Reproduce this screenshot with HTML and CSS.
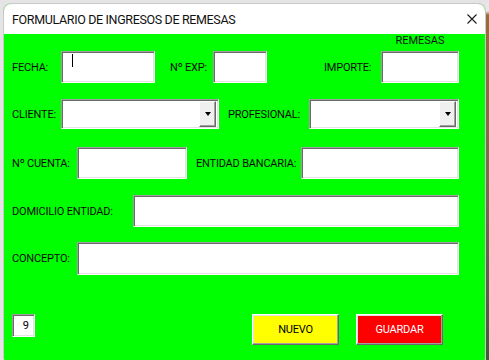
FILE: index.html
```html
<!DOCTYPE html>
<html lang="es">
<head>
  <meta charset="UTF-8">
  <meta name="viewport" content="width=device-width, initial-scale=1.0">
  <title>Formulario de ingresos de remesas</title>
  <link rel="stylesheet" href="styles.css">
</head>
<body>

  <div class="window">
    <div class="titlebar">
      <span class="title">FORMULARIO DE INGRESOS DE REMESAS</span>
      <svg class="close" width="10" height="10" viewBox="0 0 10 10">
        <path d="M0.5 0.5 L9.5 9.5 M9.5 0.5 L0.5 9.5" stroke="#1a1a1a" stroke-width="1.1" fill="none"/>
      </svg>
    </div>

    <div class="content">
      <div class="caption-row">
        <span class="caption">REMESAS</span>
      </div>

      <div class="row row-1">
        <label class="lbl w-fecha">FECHA:</label>
        <div class="field w-94"><span class="caret"></span></div>
        <label class="lbl w-exp">Nº EXP:</label>
        <div class="field w-54"></div>
        <label class="lbl w-importe">IMPORTE:</label>
        <div class="field w-78"></div>
      </div>

      <div class="row row-2">
        <label class="lbl w-fecha">CLIENTE:</label>
        <div class="field combo w-158">
          <span class="drop"><span class="arrow"></span></span>
        </div>
        <label class="lbl w-prof">PROFESIONAL:</label>
        <div class="field combo w-150">
          <span class="drop"><span class="arrow"></span></span>
        </div>
      </div>

      <div class="row row-3">
        <label class="lbl w-cuenta">Nº CUENTA:</label>
        <div class="field w-110"></div>
        <label class="lbl w-entidad">ENTIDAD BANCARIA:</label>
        <div class="field w-158"></div>
      </div>

      <div class="row row-4">
        <label class="lbl w-domicilio">DOMICILIO ENTIDAD:</label>
        <div class="field w-326"></div>
      </div>

      <div class="row row-5">
        <label class="lbl w-cuenta">CONCEPTO:</label>
        <div class="field w-382"></div>
      </div>

      <div class="bottom">
        <div class="field counter">9</div>
        <button type="button" class="btn btn-nuevo">NUEVO</button>
        <button type="button" class="btn btn-guardar">GUARDAR</button>
      </div>
    </div>
  </div>
  <div class="edge"></div>

</body>
</html>
```

FILE: styles.css
```css
* {
  margin: 0;
  padding: 0;
  box-sizing: border-box;
}

body {
  display: flex;
  height: 360px;
  padding: 3px 0 0 3px;
  overflow: hidden;
  background-color: #e4e4e4;
  font-family: Roboto, "Liberation Sans", Arial, sans-serif;
}

.window {
  width: 483px;
  height: 362px;
  border-radius: 8px;
  overflow: hidden;
  background-color: #00ff00;
  border: 1px solid #c9c9c9;
  border-bottom: none;
}

.edge {
  width: 3px;
  height: 100%;
  background: linear-gradient(#e8e8e8 0, #e8e8e8 8px, #9a6a3a 12px, #7a6a50 50%, #3f5a3a 100%);
}

.titlebar {
  display: flex;
  align-items: center;
  height: 30px;
  padding: 0 8px 0 8px;
  background-color: #fff;
}

.title {
  font-size: 12.5px;
  letter-spacing: -0.35px;
  color: #111;
}

.close {
  margin-left: auto;
  margin-right: 0;
}

.content {
  display: flex;
  flex-direction: column;
  padding-left: 8px;
}

.caption-row {
  display: flex;
  justify-content: flex-end;
  height: 17px;
  padding-right: 26px;
}

.caption {
  width: 78px;
  text-align: center;
  font-size: 11px;
  line-height: 14px;
  color: #111;
}

.row {
  display: flex;
  align-items: center;
}

.row-1 { height: 32px; }
.row-2 { height: 30px; margin-top: 16px; }
.row-3 { height: 32px; margin-top: 18px; }
.row-4 { height: 32px; margin-top: 16px; }
.row-5 { height: 33px; margin-top: 15px; }

.lbl {
  flex: none;
  white-space: nowrap;
  font-size: 11px;
  letter-spacing: -0.2px;
  color: #0a0a0a;
}

.w-fecha { width: 49px; }
.w-exp { width: 43px; margin-left: 15px; }
.w-importe { width: 57px; margin-left: 57px; }
.w-prof { width: 81px; margin-left: 9px; }
.w-cuenta { width: 65px; }
.w-entidad { width: 105px; margin-left: 9px; }
.w-domicilio { width: 121px; }

.field {
  flex: none;
  position: relative;
  height: 100%;
  background-color: #fff;
  border-top: 1px solid #a0a0a0;
  border-left: 1px solid #a0a0a0;
  border-bottom: 1px solid #fff;
  border-right: 1px solid #fff;
  box-shadow: inset 1px 1px 0 #6a6a6a, inset -1px -1px 0 #e3e3e3;
}

.w-54 { width: 54px; }
.w-78 { width: 78px; }
.w-94 { width: 94px; }
.w-110 { width: 110px; }
.w-150 { width: 150px; }
.w-158 { width: 158px; }
.w-326 { width: 326px; }
.w-382 { width: 382px; }

.caret {
  position: absolute;
  left: 10px;
  top: 2px;
  width: 1px;
  height: 13px;
  background-color: #000;
}

.combo {
  display: flex;
  justify-content: flex-end;
  padding: 1px 2px 1px 0;
}

.drop {
  display: flex;
  align-items: center;
  justify-content: center;
  width: 17px;
  height: 100%;
  background-color: #f0f0f0;
  border-top: 1px solid #fff;
  border-left: 1px solid #fff;
  border-bottom: 1px solid #696969;
  border-right: 1px solid #696969;
  box-shadow: inset -1px -1px 0 #a0a0a0;
}

.arrow {
  width: 0;
  height: 0;
  border-left: 3.5px solid transparent;
  border-right: 3.5px solid transparent;
  border-top: 4px solid #000;
}

.bottom {
  display: flex;
  align-items: flex-start;
  height: 31px;
  margin-top: 39px;
}

.counter {
  width: 23px;
  height: 23px;
  padding: 4px 5px 0 0;
  text-align: right;
  font-size: 11px;
  color: #000;
}

.btn {
  width: 87px;
  height: 31px;
  font-family: Roboto, "Liberation Sans", Arial, sans-serif;
  font-size: 11px;
  letter-spacing: -0.2px;
  border-top: 1px solid #fff;
  border-left: 1px solid #fff;
  border-bottom: 1px solid #696969;
  border-right: 1px solid #696969;
  box-shadow: inset -1px -1px 0 #a0a0a0, inset 1px 1px 0 #e3e3e3;
  cursor: pointer;
}

.btn-nuevo {
  margin-left: 217px;
  background-color: #ffff00;
  color: #000;
}

.btn-guardar {
  margin-left: 17px;
  background-color: #ff0000;
  color: #fff;
}
```
